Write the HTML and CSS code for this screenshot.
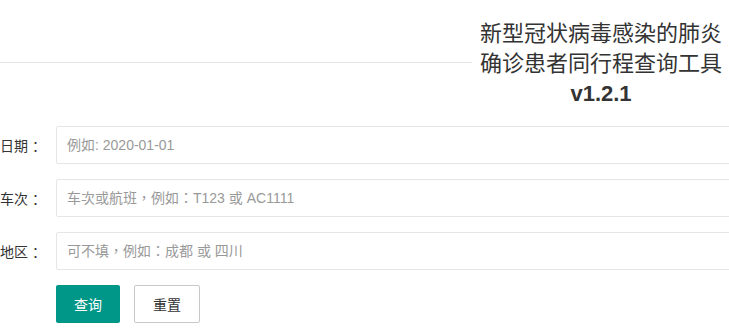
FILE: index.html
```html
<!DOCTYPE html>
<html lang="zh-CN">
<head>
<meta charset="utf-8">
<title>同行程查询工具</title>
<link rel="stylesheet" href="styles.css">
</head>
<body>
<div class="page">
  <header class="head">
    <div class="rule"></div>
    <h1 class="title">新型冠状病毒感染的肺炎确诊患者同行程查询工具 <b class="ver">v1.2.1</b></h1>
  </header>
  <form class="form">
    <div class="row">
      <label class="label">日期<span class="colon">：</span></label>
      <input class="field" lang="zh-TW" type="text" placeholder="例如: 2020-01-01">
    </div>
    <div class="row">
      <label class="label">车次<span class="colon">：</span></label>
      <input class="field" lang="zh-TW" type="text" placeholder="车次或航班，例如：T123 或 AC1111">
    </div>
    <div class="row">
      <label class="label">地区<span class="colon">：</span></label>
      <input class="field" lang="zh-TW" type="text" placeholder="可不填，例如：成都 或 四川">
    </div>
    <div class="actions">
      <button class="btn btn-primary" type="button">查询</button>
      <button class="btn btn-plain" type="reset">重置</button>
    </div>
  </form>
</div>
</body>
</html>
```

FILE: styles.css
```css
html, body {
  margin: 0;
  padding: 0;
  background: #fff;
  overflow: hidden;
}
body {
  font-family: "Liberation Sans", "Noto Sans CJK SC", sans-serif;
  color: #333;
  font-size: 14px;
}
.page {
  width: 780px;
}
.head {
  display: flex;
  align-items: flex-start;
  padding-top: 19px;
}
.rule {
  width: 472px;
  height: 1px;
  background: #e6e6e6;
  margin-top: 43px;
}
.title {
  width: 258px;
  box-sizing: border-box;
  padding: 0 8px;
  margin: 0;
  font-size: 22px;
  line-height: 30px;
  font-weight: normal;
  text-align: center;
  color: #333;
}
.ver {
  font-weight: bold;
}
.form {
  margin-top: 17px;
}
.row {
  display: flex;
  align-items: center;
  margin-bottom: 15px;
}
.label {
  width: 56px;
  box-sizing: border-box;
  padding-right: 14px;
  text-align: right;
  font-size: 14px;
  color: #333;
  white-space: nowrap;
}
.colon {
  display: inline-block;
  width: 14px;
  padding-left: 4px;
  box-sizing: border-box;
}
.field {
  width: 700px;
  height: 38px;
  box-sizing: border-box;
  border: 1px solid #e6e6e6;
  border-radius: 2px;
  padding: 0 10px;
  font-family: "Liberation Sans", "Noto Sans CJK TC", sans-serif;
  font-size: 14px;
  color: #333;
  background: #fff;
  outline: none;
}
.field::placeholder {
  color: #999;
}
.actions {
  display: flex;
  gap: 14px;
  padding-left: 56px;
}
.btn {
  height: 38px;
  padding: 0 18px;
  border-radius: 2px;
  font-family: inherit;
  font-size: 14px;
  white-space: nowrap;
  cursor: pointer;
}
.btn-primary {
  background: #009688;
  color: #fff;
  border: none;
}
.btn-plain {
  background: #fff;
  color: #333;
  border: 1px solid #c9c9c9;
}
```
